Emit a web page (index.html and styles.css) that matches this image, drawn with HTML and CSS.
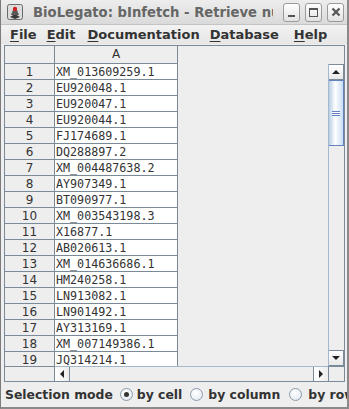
FILE: index.html
```html
<!DOCTYPE html>
<html>
<head>
<meta charset="utf-8">
<link rel="stylesheet" href="styles.css">
</head>
<body>
<div class="window">
  <div class="titlebar">
    <svg class="appicon" width="16" height="16" viewBox="0 0 16 16">
      <rect x="0.5" y="0.5" width="15" height="15" rx="2" fill="#dcdcdc" stroke="#6a6a6a"/>
      <path d="M3 13 L8 10 L13 13 L8 15 Z" fill="#3a3a3a"/>
      <path d="M4 11 L6 6 L10 6 L12 11 Z" fill="#5a5a5a"/>
      <circle cx="8" cy="5" r="2.2" fill="#d02020"/>
    </svg>
    <div class="title">BioLegato: bInfetch - Retrieve nucleotide entries</div>
    <div class="wbtns">
      <div class="wbtn"><span class="minbar"></span></div>
      <div class="wbtn"><span class="maxbox"></span></div>
      <div class="wbtn">
        <svg width="10" height="10" viewBox="0 0 10 10"><path d="M1.5 1.5 L8.5 8.5 M8.5 1.5 L1.5 8.5" stroke="#555" stroke-width="2.2"/></svg>
      </div>
    </div>
  </div>
  <div class="menubar">
    <span class="menu m1"><u>F</u>ile</span>
    <span class="menu m2"><u>E</u>dit</span>
    <span class="menu m3"><u>D</u>ocumentation</span>
    <span class="menu m4"><u>D</u>atabase</span>
    <span class="menu m5"><u>H</u>elp</span>
  </div>
  <div class="content">
    <div class="scrollpane">
      <div class="corner-tl"></div>
      <div class="colheader"><div class="hcell">A</div></div>
      <div class="corner-tr"></div>
      <div class="rowheader" id="rowheader"></div>
      <div class="viewport"><div class="colA" id="colA"></div></div>
      <div class="vscroll">
        <div class="sbtn up"><span class="tri-up"></span></div>
        <div class="vtrack"><div class="vthumb"><div class="grip"></div></div></div>
        <div class="sbtn down"><span class="tri-down"></span></div>
      </div>
      <div class="corner-bl"></div>
      <div class="hscroll">
        <div class="hbtn left"><span class="tri-left"></span></div>
        <div class="htrack"></div>
        <div class="hbtn right"><span class="tri-right"></span></div>
      </div>
      <div class="corner-br"></div>
    </div>
    <div class="selrow">
      <span class="sellabel">Selection mode</span>
      <span class="radio first on"></span><span class="rlabel">by cell</span>
      <span class="radio r2"></span><span class="rlabel">by column</span>
      <span class="radio r3"></span><span class="rlabel">by row</span>
    </div>
  </div>
</div>
<script src="app.js"></script>
</body>
</html>
```

FILE: app.js
```js
var ids = ["XM_013609259.1","EU920048.1","EU920047.1","EU920044.1","FJ174689.1","DQ288897.2","XM_004487638.2","AY907349.1","BT090977.1","XM_003543198.3","X16877.1","AB020613.1","XM_014636686.1","HM240258.1","LN913082.1","LN901492.1","AY313169.1","XM_007149386.1","JQ314214.1"];
var rh = document.getElementById("rowheader");
var ca = document.getElementById("colA");
ids.forEach(function (id, i) {
  var r = document.createElement("div");
  r.className = "rcell";
  r.textContent = String(i + 1);
  rh.appendChild(r);
  var c = document.createElement("div");
  c.className = "cell";
  c.textContent = id;
  ca.appendChild(c);
});
```

FILE: styles.css
```css
html, body {
  margin: 0;
  padding: 0;
  background: #eeeeee;
}
body {
  width: 349px;
  height: 409px;
  overflow: hidden;
  font-family: "DejaVu Sans", sans-serif;
}
.window {
  width: 349px;
  height: 409px;
  box-sizing: border-box;
  border-left: 1px solid #7c7c7c;
  border-right: 2px solid #8a8a8a;
  border-bottom: 2px solid #8a8a8a;
  display: flex;
  flex-direction: column;
  background: #eeeeee;
}
.titlebar {
  height: 25px;
  flex: none;
  display: flex;
  align-items: center;
  background: linear-gradient(#ededed, #dadada);
  border-bottom: 1px solid #c4c4c4;
  box-sizing: border-box;
  padding-left: 6px;
  overflow: hidden;
}
.appicon { flex: none; }
.title {
  margin-left: 10px;
  margin-right: 10px;
  font-weight: bold;
  font-size: 13.2px;
  color: #666666;
  white-space: nowrap;
  overflow: hidden;
  flex: 1;
  min-width: 0;
}
.wbtns {
  display: flex;
  gap: 5px;
  flex: none;
  padding-right: 3px;
}
.wbtn {
  width: 15px;
  height: 17px;
  border: 1px solid #9a9a9a;
  border-radius: 3px;
  background: linear-gradient(#ffffff, #e2e2e2);
  display: flex;
  align-items: center;
  justify-content: center;
  position: relative;
}
.minbar {
  width: 7px;
  height: 2px;
  background: #555;
  margin-top: 8px;
}
.maxbox {
  width: 7px;
  height: 6px;
  border: 1.5px solid #555;
  border-top-width: 2px;
}
.menubar {
  height: 19px;
  flex: none;
  display: flex;
  align-items: center;
  background: linear-gradient(#f2f2f2, #e6e6e6);
  font-weight: bold;
  font-size: 13px;
  color: #333;
}
.menu { white-space: nowrap; }
.menu u { text-decoration-thickness: 1px; text-underline-offset: 2px; }
.m1 { margin-left: 9px; }
.m2 { margin-left: 10px; }
.m3 { margin-left: 12px; }
.m4 { margin-left: 10px; }
.m5 { margin-left: 15px; }
.content {
  flex: 1;
  display: flex;
  flex-direction: column;
  padding: 1px 0 0 3px;
}
.scrollpane {
  width: 341px;
  height: 337px;
  box-sizing: border-box;
  border: 1px solid #7a8a99;
  display: grid;
  grid-template-columns: 50px 273px 16px;
  grid-template-rows: 18px 302px 15px;
  background: #eeeeee;
  overflow: hidden;
}
.corner-tl {
  border-bottom: 1px solid #7a8a99;
  border-right: 1px solid #7a8a99;
  box-sizing: border-box;
}
.colheader {
  display: flex;
}
.hcell {
  width: 123px;
  box-sizing: border-box;
  border-bottom: 1px solid #7a8a99;
  border-right: 1px solid #7a8a99;
  text-align: center;
  font-size: 12px;
  line-height: 17px;
  color: #333;
}
.rowheader {
  overflow: hidden;
}
.rcell {
  height: 16px;
  box-sizing: border-box;
  border-bottom: 1px solid #7a8a99;
  border-right: 1px solid #7a8a99;
  text-align: center;
  font-size: 12px;
  line-height: 17px;
  color: #333;
  overflow: hidden;
}
.viewport {
  overflow: hidden;
}
.colA {
  width: 123px;
  background: #ffffff;
}
.cell {
  height: 16px;
  box-sizing: border-box;
  border-bottom: 1px solid #7a8a99;
  border-right: 1px solid #7a8a99;
  padding-left: 1px;
  font-family: "DejaVu Sans Mono", monospace;
  font-size: 11.7px;
  line-height: 17px;
  color: #333;
  white-space: nowrap;
  overflow: hidden;
}
.vscroll {
  display: flex;
  flex-direction: column;
  border-left: 1px solid #a3b8cc;
  box-sizing: border-box;
}
.sbtn {
  height: 16px;
  flex: none;
  box-sizing: border-box;
  border: 1px solid #7a8a99;
  border-left: none;
  background: linear-gradient(#ffffff, #e8e8e8);
  display: flex;
  align-items: center;
  justify-content: center;
}
.vtrack {
  flex: 1;
  background: #eeeeee;
}
.vthumb {
  height: 66px;
  box-sizing: border-box;
  border: 1px solid #6382bf;
  border-left-width: 0;
  background: linear-gradient(90deg, #b8cfe5, #ffffff 45%, #c8ddf2);
  display: flex;
  align-items: center;
  justify-content: center;
}
.grip {
  width: 8px;
  height: 5px;
  background: repeating-linear-gradient(#6382bf 0 1px, #ffffff 1px 2px);
}
.tri-up {
  width: 0; height: 0;
  border-left: 4px solid transparent;
  border-right: 4px solid transparent;
  border-bottom: 4px solid #222;
}
.tri-down {
  width: 0; height: 0;
  border-left: 4px solid transparent;
  border-right: 4px solid transparent;
  border-top: 4px solid #222;
}
.tri-left {
  width: 0; height: 0;
  border-top: 4px solid transparent;
  border-bottom: 4px solid transparent;
  border-right: 4px solid #222;
}
.tri-right {
  width: 0; height: 0;
  border-top: 4px solid transparent;
  border-bottom: 4px solid transparent;
  border-left: 4px solid #222;
}
.corner-bl {
  border-top: 1px solid #7a8a99;
  border-right: 1px solid #7a8a99;
  box-sizing: border-box;
  background: #eeeeee;
}
.hscroll {
  display: flex;
  border-top: 1px solid #a3b8cc;
  box-sizing: border-box;
}
.hbtn {
  width: 15px;
  flex: none;
  box-sizing: border-box;
  border-right: 1px solid #7a8a99;
  background: linear-gradient(90deg, #ffffff, #ececec);
  display: flex;
  align-items: center;
  justify-content: center;
}
.hbtn.right { border-left: 1px solid #7a8a99; border-right: none; }
.htrack {
  flex: 1;
  background: #eeeeee;
}
.corner-br {
  border-top: 1px solid #7a8a99;
  border-left: 1px solid #7a8a99;
  box-sizing: border-box;
}
.selrow {
  display: flex;
  align-items: center;
  height: 22px;
  margin-top: 1px;
  padding-left: 1px;
  font-weight: bold;
  font-size: 12.4px;
  color: #333;
  white-space: nowrap;
  overflow: hidden;
}
.radio {
  width: 13px;
  height: 13px;
  box-sizing: border-box;
  flex: none;
  border: 1px solid #8a9aaa;
  border-radius: 50%;
  background: radial-gradient(circle at 40% 35%, #ffffff, #dfe6ee);
  margin-left: 8px;
  margin-right: 5px;
  position: relative;
}
.radio.first { margin-left: 7px; margin-right: 4px; }
.radio.r3 { margin-left: 9px; margin-right: 6px; }
.radio.on::after {
  content: "";
  position: absolute;
  left: 3px;
  top: 3px;
  width: 5px;
  height: 5px;
  border-radius: 50%;
  background: #333;
}
```
